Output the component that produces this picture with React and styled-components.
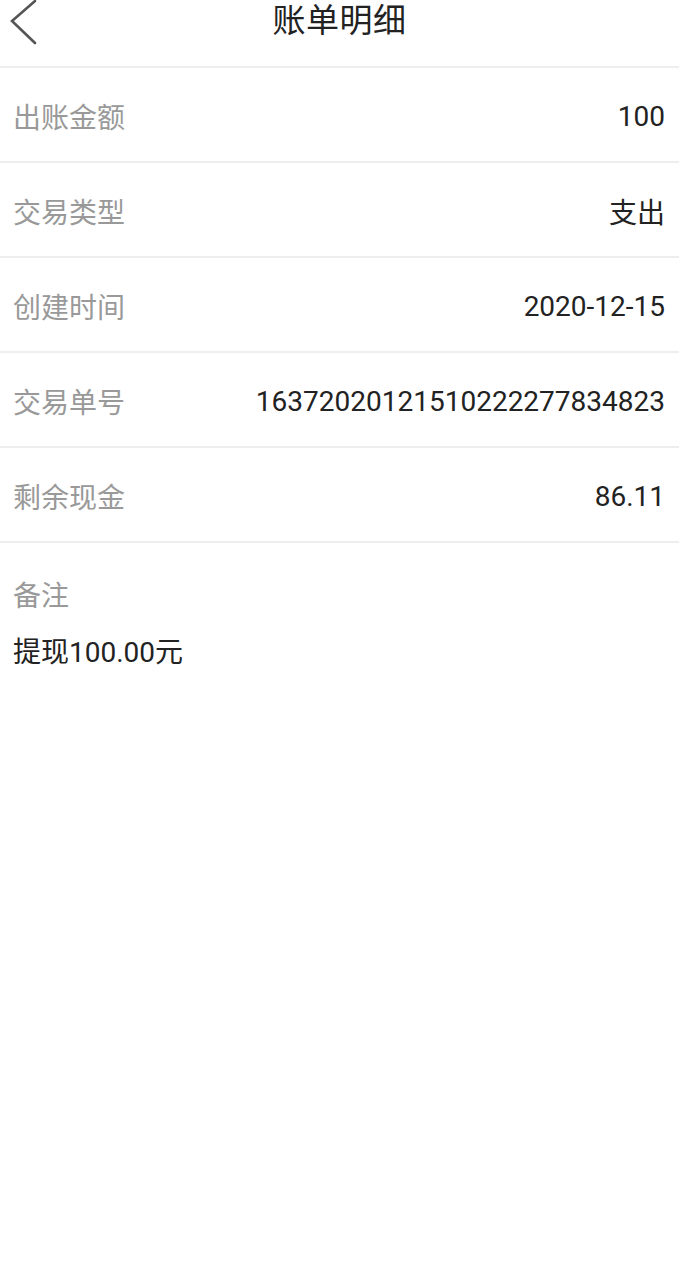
import React from "react";
import styled, { createGlobalStyle } from "styled-components";

const GlobalStyle = createGlobalStyle`
  html, body {
    margin: 0;
    padding: 0;
    background: #fff;
    font-family: Roboto, "Noto Sans CJK SC", sans-serif;
  }
`;

const Page = styled.div`
  width: 679px;
  min-height: 1280px;
  background: #fff;
`;

const Header = styled.div`
  position: relative;
  height: 68px;
  box-sizing: border-box;
  padding-bottom: 24px;
  display: flex;
  align-items: center;
  justify-content: center;
  border-bottom: 2px solid #eeeeee;
`;

const Back = styled.button`
  position: absolute;
  left: 6px;
  top: -2px;
  width: 34px;
  height: 48px;
  padding: 0;
  border: none;
  background: none;
  display: flex;
  align-items: center;
  justify-content: center;
`;

const Title = styled.h1`
  margin: 0;
  font-size: 33px;
  font-weight: 400;
  color: #222;
  letter-spacing: 0.5px;
  line-height: 44px;
`;

const Row = styled.div`
  height: 95px;
  box-sizing: border-box;
  padding: 3px 14px 0 13px;
  display: flex;
  align-items: center;
  justify-content: space-between;
  border-bottom: 2px solid #eeeeee;
  font-size: 28px;
`;

const Label = styled.span`
  color: #999;
`;

const Value = styled.span`
  color: #222;
`;

const Remark = styled.div`
  padding: 34px 13px 0;
  font-size: 28px;
`;

const RemarkLabel = styled.div`
  color: #999;
  line-height: 40px;
`;

const RemarkText = styled.div`
  margin-top: 16px;
  color: #222;
  line-height: 40px;
`;

const rows = [
  ["出账金额", "100"],
  ["交易类型", "支出"],
  ["创建时间", "2020-12-15"],
  ["交易单号", "16372020121510222277834823"],
  ["剩余现金", "86.11"],
];

export default function App() {
  return (
    <Page>
      <GlobalStyle />
      <Header>
        <Back aria-label="返回">
          <svg width="30" height="46" viewBox="0 0 30 46">
            <polyline
              points="27,2 4,22 27,44"
              fill="none"
              stroke="#555"
              strokeWidth="2.6"
              strokeLinecap="round"
              strokeLinejoin="miter"
            />
          </svg>
        </Back>
        <Title>账单明细</Title>
      </Header>
      {rows.map(([k, v]) => (
        <Row key={k}>
          <Label>{k}</Label>
          <Value>{v}</Value>
        </Row>
      ))}
      <Remark>
        <RemarkLabel>备注</RemarkLabel>
        <RemarkText>提现100.00元</RemarkText>
      </Remark>
    </Page>
  );
}
